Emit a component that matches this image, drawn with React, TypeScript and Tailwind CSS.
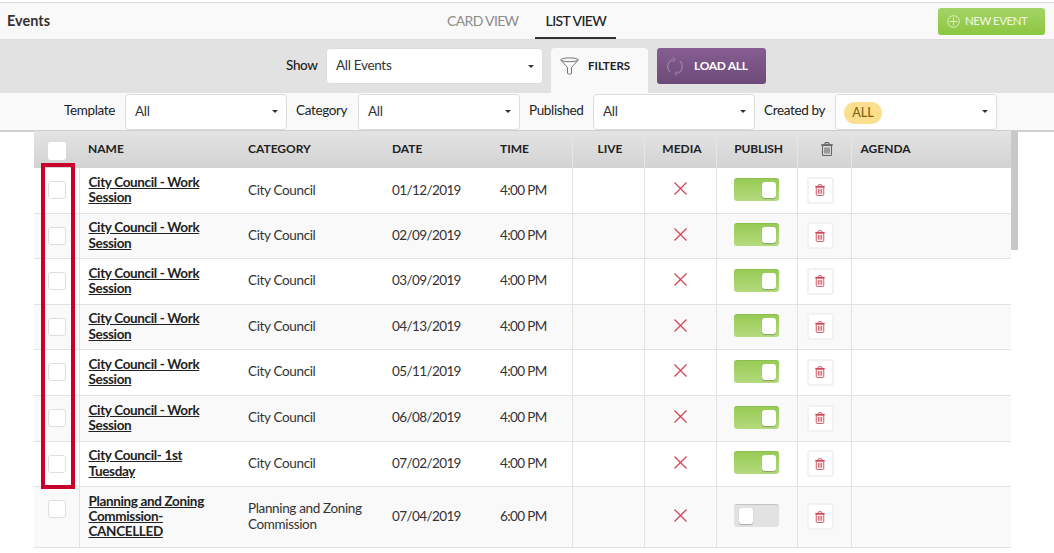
import type { ReactNode } from "react";

type EventRow = {
  name: string;
  category: string;
  date: string;
  time: string;
  published: boolean;
  height: string;
};

const rows: EventRow[] = [
  { name: "City Council - Work Session", category: "City Council", date: "01/12/2019", time: "4:00 PM", published: true, height: "h-[45px]" },
  { name: "City Council - Work Session", category: "City Council", date: "02/09/2019", time: "4:00 PM", published: true, height: "h-[45px]" },
  { name: "City Council - Work Session", category: "City Council", date: "03/09/2019", time: "4:00 PM", published: true, height: "h-[46px]" },
  { name: "City Council - Work Session", category: "City Council", date: "04/13/2019", time: "4:00 PM", published: true, height: "h-[45px]" },
  { name: "City Council - Work Session", category: "City Council", date: "05/11/2019", time: "4:00 PM", published: true, height: "h-[46px]" },
  { name: "City Council - Work Session", category: "City Council", date: "06/08/2019", time: "4:00 PM", published: true, height: "h-[46px]" },
  { name: "City Council- 1st Tuesday", category: "City Council", date: "07/02/2019", time: "4:00 PM", published: true, height: "h-[45px]" },
  { name: "Planning and Zoning Commission- CANCELLED", category: "Planning and Zoning Commission", date: "07/04/2019", time: "6:00 PM", published: false, height: "h-[61px]" },
];

function TrashIcon({ className }: { className: string }) {
  return (
    <svg className={className} viewBox="0 0 12 14" fill="none" stroke="currentColor" strokeWidth="1.1">
      <path d="M0.3 3h11.4" strokeWidth="1.8" />
      <path d="M3.5 2.2 L4.5 0.6 H7.5 L8.5 2.2" />
      <rect x="1.5" y="3.5" width="9" height="10" rx="1" />
      <path d="M4 5.5v6M6 5.5v6M8 5.5v6" />
    </svg>
  );
}

function CrossIcon() {
  return (
    <svg className="w-[13px] h-[13px] text-[#d2404f] mx-auto" viewBox="0 0 13 13" stroke="currentColor" strokeWidth="1.15">
      <path d="M0.5 0.5 12.5 12.5M12.5 0.5 0.5 12.5" />
    </svg>
  );
}

function Select({ width, children }: { width: string; children: ReactNode }) {
  return (
    <div className={`${width} h-[36px] bg-white border border-[#dcdcdc] rounded-[4px] flex items-center justify-between pl-[9px] pr-[8px] text-[13.5px] tracking-[-0.3px] text-[#333]`}>
      <span className="flex items-center pb-[1px]">{children}</span>
      <span className="w-0 h-0 border-x-[3px] border-x-transparent border-t-[3px] border-t-[#333]" />
    </div>
  );
}

function Label({ width, children }: { width: string; children: ReactNode }) {
  return <span className={`${width} whitespace-nowrap text-[13.5px] tracking-[-0.35px] text-[#222] leading-none pb-[1px]`}>{children}</span>;
}

function Toggle({ on }: { on: boolean }) {
  return on ? (
    <div className="w-[45px] h-[23px] rounded-[3px] bg-gradient-to-b from-[#98cb55] to-[#b4da7d] border-t border-[#8cbd50] flex items-center justify-end pr-[3px] mx-auto">
      <div className="w-[14px] h-[16px] bg-white rounded-[3px] shadow-[0_1px_1px_rgba(0,0,0,0.25)]" />
    </div>
  ) : (
    <div className="w-[45px] h-[23px] rounded-[3px] bg-[#e2e2e2] border-t border-[#c4c4c4] flex items-center pl-[5px] mx-auto">
      <div className="w-[14px] h-[16px] bg-white rounded-[3px] shadow-[0_1px_1px_rgba(0,0,0,0.25)]" />
    </div>
  );
}

function Check({ header }: { header?: boolean }) {
  return (
    <div className={`w-[18px] h-[18px] rounded-[3px] bg-white mx-auto ${header ? "" : "border border-[#dedede]"}`} />
  );
}

export default function App() {
  return (
    <div className="relative w-[1054px] h-[553px] overflow-hidden bg-white font-['Lato',sans-serif] text-[#222]">
      {/* top tabs */}
      <div className="mt-[2px] h-[38px] bg-[#f9f9f9] border-y border-[#dcdcdc] flex items-center justify-between pl-[7px] pr-[9px] relative">
        <span className="text-[14.5px] font-bold text-[#333] w-[200px]">Events</span>
        <div className="absolute left-[434px] top-0 flex h-[36px] text-[14px]">
          <span className="px-[13px] mr-[4px] flex items-center text-[#8c8c8c] tracking-[-0.65px] pb-[2px]">CARD VIEW</span>
          <span className="px-[10px] flex items-center font-medium text-[#222] border-b-2 border-[#333] tracking-[-0.55px]">LIST VIEW</span>
        </div>
        <button className="w-[107px] h-[27px] rounded-[3px] bg-gradient-to-b from-[#a5d367] to-[#8cc63f] text-[#f2f8e6] text-[11.5px] tracking-[-0.5px] flex items-center gap-[5px] pl-[9px]">
          <svg className="w-[13px] h-[13px]" viewBox="0 0 13 13" fill="none" stroke="#e6f3d2" strokeWidth="0.9">
            <circle cx="6.5" cy="6.5" r="5.8" />
            <path d="M6.5 2.5v8M2.5 6.5h8" />
          </svg>
          NEW EVENT
        </button>
      </div>

      {/* show bar */}
      <div className="h-[53px] bg-[#e2e2e2] flex pl-[286px] pt-[8px]">
        <div className="flex items-center gap-[8px] h-[36px]">
          <span className="w-[32px] whitespace-nowrap text-[13.5px] font-medium tracking-[-0.35px] text-[#222] pb-[2px]">Show</span>
          <Select width="w-[217px]">All Events</Select>
        </div>
        <div className="ml-[8px] w-[97px] h-[45px] bg-[#f9f9f9] rounded-t-[4px] flex items-center gap-[9px] pl-[9px] pb-[9px]">
          <svg className="w-[19px] h-[19px] text-[#666]" viewBox="0 0 19 19" fill="none" stroke="currentColor" strokeWidth="0.9">
            <ellipse cx="9.5" cy="2.8" rx="8.8" ry="1.9" />
            <path d="M0.8 3 7.5 10.5V16.5Q9.5 18 11.5 16.5V10.5L18.2 3" />
          </svg>
          <span className="text-[11.5px] font-bold text-[#222]">FILTERS</span>
        </div>
        <button className="ml-[9px] w-[109px] h-[36px] rounded-[3px] bg-gradient-to-b from-[#875e92] to-[#6b4a78] text-white text-[12px] tracking-[-0.3px] font-bold flex items-center gap-[11px] pl-[10px]">
          <svg className="w-[16px] h-[19px]" viewBox="0 0 16 19" fill="none" stroke="#ab94b4" strokeWidth="1">
            <path d="M5.5 2.6C2.6 3.6.7 6.3.7 9.5c0 2.3 1 4.3 2.6 5.7" />
            <path d="M10.5 16.4c2.9-1 4.8-3.7 4.8-6.9 0-2.3-1-4.3-2.6-5.7" />
            <path d="M6 .6 8 2.6 5.6 4.4" />
            <path d="M10 18.4 8 16.4 10.4 14.6" />
          </svg>
          LOAD ALL
        </button>
      </div>

      {/* filter row */}
      <div className="h-[37px] bg-[#f9f9f9] border-b-2 border-[#cfcfcf] flex pl-[64px] box-content">
        <div className="flex items-center gap-[9px]">
          <Label width="w-[52px]">Template</Label>
          <Select width="w-[162px]">All</Select>
        </div>
        <div className="flex items-center gap-[9px] ml-[9px]">
          <Label width="w-[53px]">Category</Label>
          <Select width="w-[162px]">All</Select>
        </div>
        <div className="flex items-center gap-[9px] ml-[9px]">
          <Label width="w-[55px]">Published</Label>
          <Select width="w-[162px]">All</Select>
        </div>
        <div className="flex items-center gap-[9px] ml-[9px]">
          <Label width="w-[62px]">Created by</Label>
          <Select width="w-[162px]">
            <span className="-ml-px mt-[3px] w-[38px] h-[22px] rounded-full bg-[#fbdf8f] text-[#7d6210] text-[12.5px] tracking-normal font-medium flex items-center justify-center pt-px">ALL</span>
          </Select>
        </div>
      </div>

      {/* table */}
      <div className="flex pl-[34px] -mt-px">
        <table className="w-[977px] table-fixed border-collapse text-[13.5px] tracking-[-0.35px]">
          <colgroup>
            <col className="w-[45px]" />
            <col className="w-[169px]" />
            <col className="w-[144px]" />
            <col className="w-[108px]" />
            <col className="w-[72px]" />
            <col className="w-[72px]" />
            <col className="w-[72px]" />
            <col className="w-[81px]" />
            <col className="w-[54px]" />
            <col />
          </colgroup>
          <thead>
            <tr className="h-[37px] bg-gradient-to-b from-[#e3e3e3] to-[#d3d3d3] text-[12px] tracking-normal font-bold text-[#222]">
              <th className="pt-[2px] pl-px"><Check header /></th>
              <th className="text-left pl-[9px] pb-[2px] font-bold">NAME</th>
              <th className="text-left pb-[2px] font-bold">CATEGORY</th>
              <th className="text-left pb-[2px] font-bold">DATE</th>
              <th className="text-left pb-[2px] font-bold">TIME</th>
              <th className="border-l border-[#e6e6e6] pl-[4px] pb-[2px] font-bold">LIVE</th>
              <th className="border-l border-[#e6e6e6] pl-[4px] pb-[2px] font-bold">MEDIA</th>
              <th className="border-l border-[#e6e6e6] pl-[4px] pb-[2px] font-bold tracking-[-0.2px]">PUBLISH</th>
              <th className="border-l border-[#e6e6e6] pl-[6px] pb-[2px]">
                <TrashIcon className="w-[12px] h-[14px] text-[#666] mx-auto" />
              </th>
              <th className="border-l border-[#e6e6e6] text-left pl-[9px] pb-[2px] font-bold">AGENDA</th>
            </tr>
          </thead>
          <tbody>
            {rows.map((row, i) => (
              <tr key={row.date} className={`${row.height} border-b border-[#e2e2e2] ${i % 2 === 0 ? "bg-white" : "bg-[#f9f9f9]"}`}>
                <td className="border-r border-[#e2e2e2] align-top pt-[13px] pl-px"><Check /></td>
                <td className="pl-[9px] pr-[40px] font-bold leading-[15.2px] text-[#222] underline">{row.name}</td>
                <td className="text-[#333] leading-[15.2px] pr-[8px]">{row.category}</td>
                <td className="text-[#333] tracking-[-0.6px] pb-px">{row.date}</td>
                <td className="text-[#333] tracking-[-0.6px] pb-px">{row.time}</td>
                <td className="border-l border-[#e2e2e2]" />
                <td className="border-l border-[#e2e2e2] pb-[3px]"><CrossIcon /></td>
                <td className="border-l border-[#e2e2e2] pb-[2px]"><Toggle on={row.published} /></td>
                <td className="border-l border-[#e2e2e2]">
                  <div className="w-[27px] h-[27px] ml-[9px] bg-white border-2 border-[#f2f2f2] rounded-[3px] flex items-center justify-center">
                    <TrashIcon className="w-[10px] h-[12px] mr-px text-[#cc4a58]" />
                  </div>
                </td>
                <td className="border-l border-[#e2e2e2]" />
              </tr>
            ))}
          </tbody>
        </table>
        <div className="w-[7px] h-[119px] bg-[#c8c8c8]" />
      </div>

      {/* annotation */}
      <div className="absolute left-[41px] top-[163px] w-[34px] h-[326px] border-[4px] border-[#c8002b]" />
    </div>
  );
}
